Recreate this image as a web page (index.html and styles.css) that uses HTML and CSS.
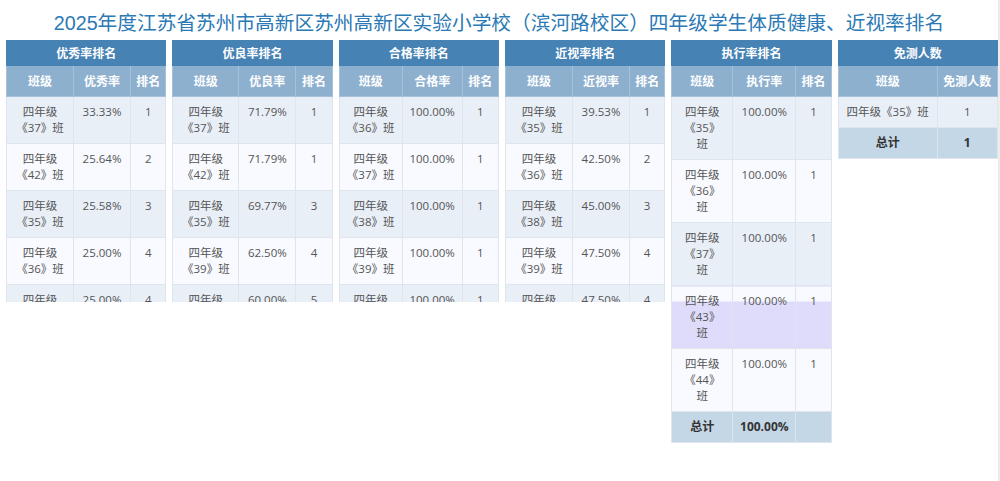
FILE: index.html
```html
<!DOCTYPE html>
<html lang="zh-CN">
<head>
<meta charset="utf-8">
<title>体质健康、近视率排名</title>
<link rel="stylesheet" href="styles.css">
</head>
<body>
<h1 class="title">2025年度江苏省苏州市高新区苏州高新区实验小学校（滨河路校区）四年级学生体质健康、近视率排名</h1>
<div class="boards">
  <div class="panel clip">
    <table>
      <colgroup><col class="c1a"><col class="c1b"><col></colgroup>
      <thead>
        <tr><th class="cap" colspan="3">优秀率排名</th></tr>
        <tr class="head"><th>班级</th><th>优秀率</th><th>排名</th></tr>
      </thead>
      <tbody>
        <tr class="odd"><td>四年级<br>《37》班</td><td>33.33%</td><td>1</td></tr>
        <tr class="even"><td>四年级<br>《42》班</td><td>25.64%</td><td>2</td></tr>
        <tr class="odd"><td>四年级<br>《35》班</td><td>25.58%</td><td>3</td></tr>
        <tr class="even"><td>四年级<br>《36》班</td><td>25.00%</td><td>4</td></tr>
        <tr class="odd"><td>四年级<br>《43》班</td><td>25.00%</td><td>4</td></tr>
      </tbody>
    </table>
  </div>
  <div class="panel clip">
    <table>
      <colgroup><col class="c2a"><col class="c2b"><col></colgroup>
      <thead>
        <tr><th class="cap" colspan="3">优良率排名</th></tr>
        <tr class="head"><th>班级</th><th>优良率</th><th>排名</th></tr>
      </thead>
      <tbody>
        <tr class="odd"><td>四年级<br>《37》班</td><td>71.79%</td><td>1</td></tr>
        <tr class="even"><td>四年级<br>《42》班</td><td>71.79%</td><td>1</td></tr>
        <tr class="odd"><td>四年级<br>《35》班</td><td>69.77%</td><td>3</td></tr>
        <tr class="even"><td>四年级<br>《39》班</td><td>62.50%</td><td>4</td></tr>
        <tr class="odd"><td>四年级<br>《36》班</td><td>60.00%</td><td>5</td></tr>
      </tbody>
    </table>
  </div>
  <div class="panel clip">
    <table>
      <colgroup><col class="c3a"><col class="c3b"><col></colgroup>
      <thead>
        <tr><th class="cap" colspan="3">合格率排名</th></tr>
        <tr class="head"><th>班级</th><th>合格率</th><th>排名</th></tr>
      </thead>
      <tbody>
        <tr class="odd"><td>四年级<br>《36》班</td><td>100.00%</td><td>1</td></tr>
        <tr class="even"><td>四年级<br>《37》班</td><td>100.00%</td><td>1</td></tr>
        <tr class="odd"><td>四年级<br>《38》班</td><td>100.00%</td><td>1</td></tr>
        <tr class="even"><td>四年级<br>《39》班</td><td>100.00%</td><td>1</td></tr>
        <tr class="odd"><td>四年级<br>《42》班</td><td>100.00%</td><td>1</td></tr>
      </tbody>
    </table>
  </div>
  <div class="panel clip">
    <table>
      <colgroup><col class="c4a"><col class="c4b"><col></colgroup>
      <thead>
        <tr><th class="cap" colspan="3">近视率排名</th></tr>
        <tr class="head"><th>班级</th><th>近视率</th><th>排名</th></tr>
      </thead>
      <tbody>
        <tr class="odd"><td>四年级<br>《35》班</td><td>39.53%</td><td>1</td></tr>
        <tr class="even"><td>四年级<br>《36》班</td><td>42.50%</td><td>2</td></tr>
        <tr class="odd"><td>四年级<br>《38》班</td><td>45.00%</td><td>3</td></tr>
        <tr class="even"><td>四年级<br>《39》班</td><td>47.50%</td><td>4</td></tr>
        <tr class="odd"><td>四年级<br>《42》班</td><td>47.50%</td><td>4</td></tr>
      </tbody>
    </table>
  </div>
  <div class="panel">
    <table>
      <colgroup><col class="c5a"><col class="c5b"><col></colgroup>
      <thead>
        <tr><th class="cap" colspan="3">执行率排名</th></tr>
        <tr class="head"><th>班级</th><th>执行率</th><th>排名</th></tr>
      </thead>
      <tbody>
        <tr class="odd"><td>四年级<br>《35》<br>班</td><td>100.00%</td><td>1</td></tr>
        <tr class="even"><td>四年级<br>《36》<br>班</td><td>100.00%</td><td>1</td></tr>
        <tr class="odd"><td>四年级<br>《37》<br>班</td><td>100.00%</td><td>1</td></tr>
        <tr class="hover"><td>四年级<br>《43》<br>班</td><td>100.00%</td><td>1</td></tr>
        <tr class="even"><td>四年级<br>《44》<br>班</td><td>100.00%</td><td>1</td></tr>
        <tr class="total"><td>总计</td><td>100.00%</td><td></td></tr>
      </tbody>
    </table>
  </div>
  <div class="panel">
    <table>
      <colgroup><col class="c6a"><col></colgroup>
      <thead>
        <tr><th class="cap" colspan="2">免测人数</th></tr>
        <tr class="head"><th>班级</th><th>免测人数</th></tr>
      </thead>
      <tbody>
        <tr class="odd"><td>四年级《35》班</td><td>1</td></tr>
        <tr class="total"><td>总计</td><td>1</td></tr>
      </tbody>
    </table>
  </div>
</div>
</body>
</html>
```

FILE: styles.css
```css
html {
  background: #fff;
}
body {
  margin: 0;
  min-height: 481px;
  box-sizing: border-box;
  border-right: 2px solid #ececec;
  font-family: "Open Sans", "Noto Sans CJK SC", sans-serif;
  color: #555;
}
.title {
  margin: 0;
  height: 40px;
  display: flex;
  align-items: center;
  justify-content: center;
  padding-top: 2px;
  box-sizing: border-box;
  font-family: "Liberation Sans", "Noto Sans CJK SC", sans-serif;
  font-size: 19.7px;
  font-weight: normal;
  color: #2b79b5;
  white-space: nowrap;
}
.boards {
  display: flex;
  align-items: flex-start;
  gap: 6px;
  padding-left: 6px;
}
.panel {
  flex: 1 1 0;
  min-width: 0;
}
.panel.clip {
  height: 262px;
  overflow: hidden;
}
table {
  width: 100%;
  table-layout: fixed;
  border-collapse: collapse;
}
th {
  font-family: "Noto Sans CJK SC", sans-serif;
  font-size: 12px;
  font-weight: bold;
  color: #fff;
  text-align: center;
  padding: 0 2px;
  line-height: 16px;
}
th.cap {
  height: 24px;
  background: #4682b4;
  border: 1px solid #4682b4;
}
.head th {
  height: 30px;
  background: #8eb0cf;
  border: 1px solid #a7c1da;
}
td {
  padding: 7px 2px;
  vertical-align: top;
  text-align: center;
  font-size: 11.5px;
  line-height: 16px;
  color: #555;
  border: 1px solid #dfe5ec;
  white-space: nowrap;
}
.odd td {
  background: #e9eff7;
}
.even td {
  background: #f8faff;
}
.hover td {
  background: linear-gradient(to bottom, #f8faff 0, #f8faff 15px, #dfdcfb 15px);
}
.total td {
  background: #c4d7e7;
  font-weight: bold;
  color: #333;
  font-size: 12px;
}
.c1a { width: 67px; }
.c1b { width: 57px; }
.c2a { width: 66px; }
.c2b { width: 57px; }
.c3a { width: 63px; }
.c3b { width: 60px; }
.c4a { width: 67px; }
.c4b { width: 57px; }
.c5a { width: 61px; }
.c5b { width: 63px; }
.c6a { width: 99px; }
```
